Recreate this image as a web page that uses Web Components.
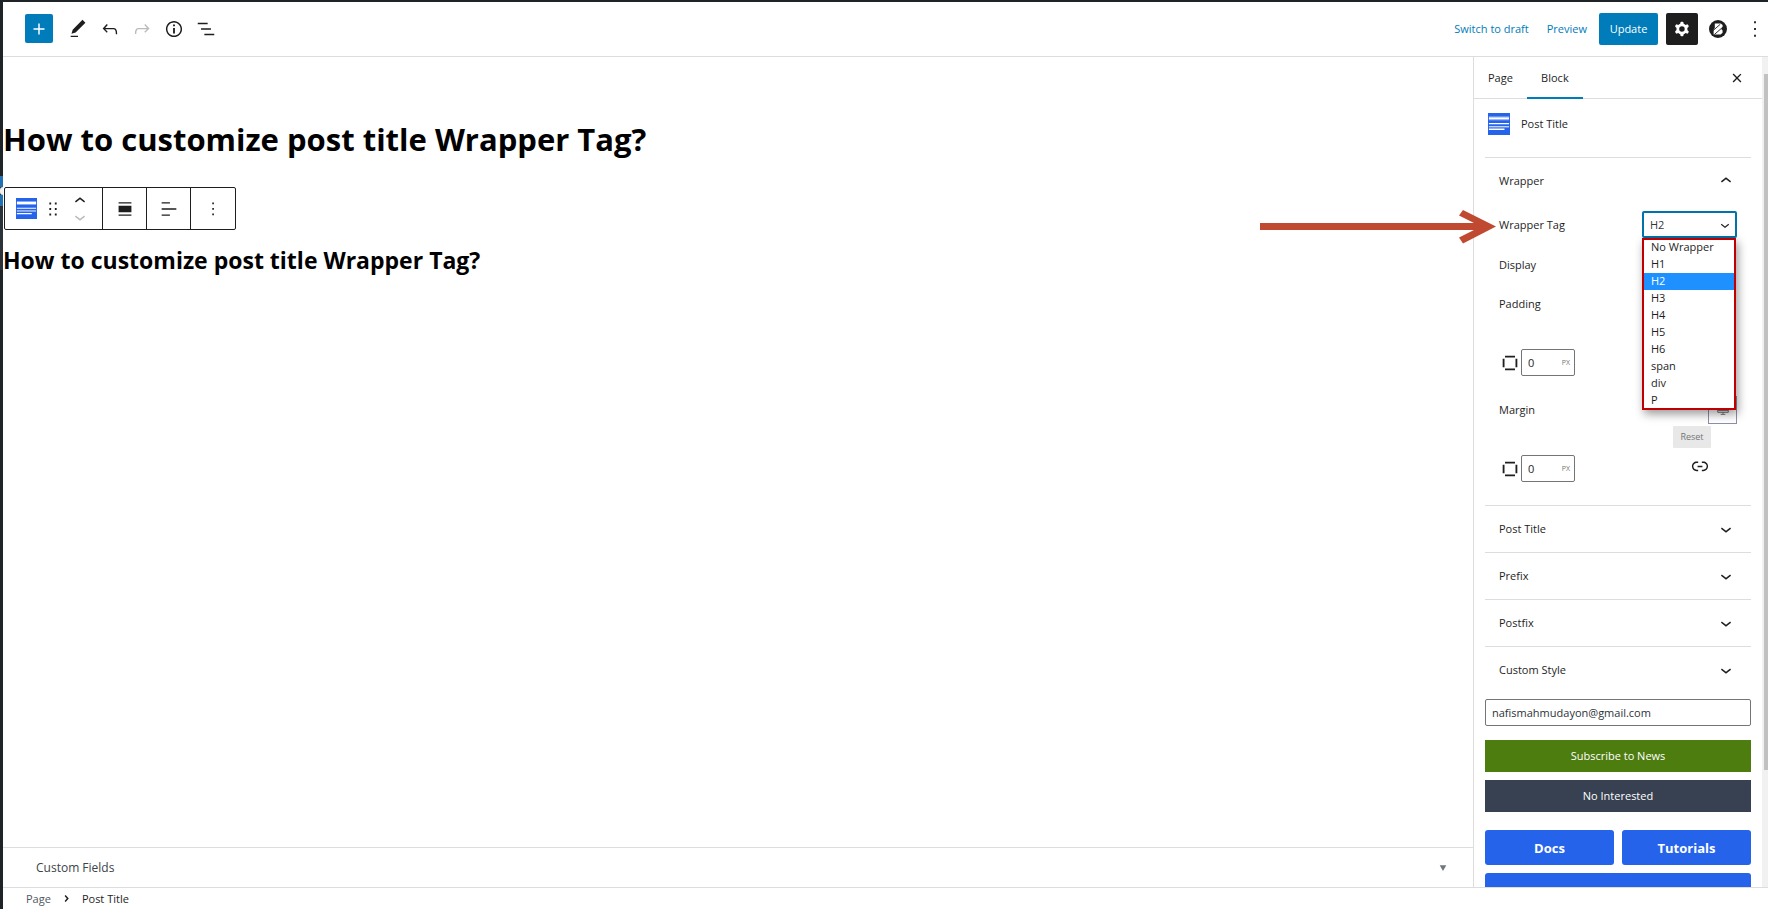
<!DOCTYPE html>
<html lang="en">
<head>
<meta charset="utf-8">
<title>Edit Page</title>
<style>
  html, body { margin: 0; height: 100%; }
  body {
    font: 11px/16px "Open Sans", "Noto Sans", sans-serif;
    color: #1e1e1e;
    background: #fff;
    overflow: hidden;
    --blue: #007cba;
    --ink: #1e1e1e;
    --line: #ddd;
    --royal: #2563eb;
  }
</style>
</head>
<body>
<editor-shell>
  <editor-header slot="header"></editor-header>
  <editor-canvas slot="canvas" heading="How to customize post title Wrapper Tag?"></editor-canvas>
  <block-sidebar slot="sidebar"></block-sidebar>
  <editor-breadcrumb slot="footer"></editor-breadcrumb>
</editor-shell>

<script>
const ICONS = {
  plus: '<path d="M18 11.2h-5.2V6h-1.6v5.2H6v1.6h5.2V18h1.6v-5.2H18z"/>',
  edit: '<path d="M20.1 5.1L16.9 2 6.2 12.7l-1.3 4.4 4.5-1.3L20.1 5.1zM4 20.8h8v-1.5H4v1.5z"/>',
  undo: '<path d="M18.3 11.7c-.6-.6-1.4-.9-2.3-.9H6.7l2.9-3.3-1.1-1-4.5 5L8.5 16l1-1-2.7-2.7H16c.5 0 .9.2 1.3.5 1 1 1 3.4 1 4.5v.3h1.5v-.2c0-1.5 0-4.3-1.5-5.7z"/>',
  redo: '<path d="M15.6 6.5l-1.1 1 2.9 3.3H8c-.9 0-1.7.3-2.3.9-1.4 1.5-1.4 4.2-1.4 5.6v.2h1.5v-.3c0-1.1 0-3.5 1-4.5.3-.3.7-.5 1.3-.5h9.2L14.5 15l1.1 1.1 4.6-4.6-4.6-5z"/>',
  info: '<path d="M12 3.2c-4.8 0-8.8 3.9-8.8 8.8 0 4.8 3.9 8.8 8.8 8.8 4.8 0 8.8-3.9 8.8-8.8 0-4.8-4-8.8-8.8-8.8zm0 16c-4 0-7.2-3.3-7.2-7.2C4.8 8 8 4.8 12 4.8s7.2 3.3 7.2 7.2c0 4-3.2 7.2-7.2 7.2zM11 17h2v-6h-2v6zm0-8h2V7h-2v2z"/>',
  list: '<path d="M13.8 5.2H3v1.5h10.8V5.2zm-3.6 12v1.5H21v-1.5H10.2zm7.2-6H6.6v1.5h10.8v-1.5z"/>',
  cog: '<path fill-rule="evenodd" d="M10.289 4.836A1 1 0 0111.275 4h1.306a1 1 0 01.987.836l.244 1.466c.787.26 1.503.679 2.108 1.218l1.393-.522a1 1 0 011.216.437l.653 1.13a1 1 0 01-.23 1.273l-1.148.944a6.025 6.025 0 010 2.435l1.149.946a1 1 0 01.23 1.272l-.653 1.13a1 1 0 01-1.216.437l-1.394-.522c-.605.54-1.32.958-2.108 1.218l-.244 1.466a1 1 0 01-.987.836h-1.306a1 1 0 01-.986-.836l-.244-1.466a5.995 5.995 0 01-2.108-1.218l-1.394.522a1 1 0 01-1.217-.436l-.653-1.131a1 1 0 01.23-1.272l1.149-.946a6.026 6.026 0 010-2.435l-1.148-.944a1 1 0 01-.23-1.272l.653-1.131a1 1 0 011.217-.437l1.393.522a5.994 5.994 0 012.108-1.218l.244-1.466zM14.929 12a3 3 0 11-6 0 3 3 0 016 0z"/>',
  brand: '<circle cx="12" cy="12" r="9.800"/><path fill="#fff" d="M8.500 6h6.500l2 1.500v2.700L15.500 12l1.500 1.600v2.600L14.800 18H7.200v-5.200L8.500 11z"/><path stroke="#1e1e1e" stroke-width="1" fill="none" d="M6.500 13.800L14.500 6.800M8 18L17.500 9.800"/>',
  more: '<path d="M11 3.500h2v2.200h-2zM11 10.900h2v2.200h-2zM11 18.300h2v2.200h-2z"/>',
  dots: '<path d="M11.200 5h1.800v1.800h-1.800zM11.200 11h1.800v1.800h-1.800zM11.200 17h1.800v1.800h-1.800z"/>',
  drag: '<path d="M8 5h2v2H8zM14 5h2v2h-2zM8 11h2v2H8zM14 11h2v2h-2zM8 17h2v2H8zM14 17h2v2h-2z"/>',
  up: '<path d="M6.500 12.400L12 8l5.500 4.400-.9 1.200L12 10l-4.500 3.600-1-1.200z"/>',
  down: '<path d="M17.500 11.600L12 16l-5.500-4.400.9-1.200L12 14l4.500-3.600 1 1.200z"/>',
  right: '<path d="M7 5.500l2.800-2.600L18 12l-8.200 9.100L7 18.500 12.800 12z"/>',
  close: '<path d="M12 13.060l3.712 3.713 1.061-1.060L13.061 12l3.712-3.712-1.060-1.060L12 10.938 8.288 7.227l-1.061 1.060L10.939 12l-3.712 3.712 1.060 1.061L12 13.061z"/>',
  link: '<path d="M15.600 7.200H14v1.500h1.600c2 0 3.700 1.700 3.700 3.700s-1.700 3.700-3.700 3.700H14v1.500h1.600c2.800 0 5.200-2.300 5.200-5.200 0-2.900-2.300-5.200-5.200-5.200zM4.700 12.400c0-2 1.700-3.700 3.700-3.700H10V7.200H8.400c-2.900 0-5.200 2.300-5.200 5.200 0 2.900 2.300 5.200 5.200 5.200H10v-1.500H8.400c-2 0-3.700-1.700-3.700-3.700zm4.600.9h5.300v-1.500H9.300v1.500z"/>',
  wide: '<path d="M5 4.600h14v1.500H5zM5 17.900h14v1.500H5zM5 8.500h14v7H5z"/>',
  text: '<path d="M4 4.600h9v1.500H4zM4 11.200h16v1.500H4zM4 17.900h9v1.500H4z"/>',
  sides: '<path d="M6 3.200h12v2.200H6zM6 18.600h12v2.200H6zM3.200 7h2.200v10H3.200zM18.600 7h2.200v10h-2.200z"/>',
  monitor: '<path fill="none" stroke="#666" stroke-width="1.500" d="M3 4h18v12H3zM3 13h18M8 19.500h8M12 16v3"/>',
  caret: '<path fill="#72777c" d="M2 4h20L12 21z"/>',
  block: '<path fill="#2563eb" d="M0 0h24v24H0z"/><path fill="#fff" d="M1 4.500h22V7H1zM1 11h22v1.300H1zM1 14.200h22V15H1zM1 17h17v1.600H1z"/><path fill="#a9c1f7" d="M1 3.700h22v.8H1zM1 7h22v.8H1zM1 15h22v.7H1z"/>'
};

const define = (name, markup, setup) => {
  const template = document.createElement('template');
  template.innerHTML = markup;
  customElements.define(name, class extends HTMLElement {
    connectedCallback() {
      if (this.shadowRoot) return;
      const root = this.attachShadow({ mode: 'open' });
      root.append(template.content.cloneNode(true));
      if (setup) setup(root, this);
    }
  });
};

define('ui-icon', `
  <style>
    :host { display: inline-flex; flex: none; width: 22px; height: 22px; }
    svg { width: 100%; height: 100%; fill: currentColor; }
  </style>
  <svg viewBox="0 0 24 24" aria-hidden="true"></svg>`,
  (root, el) => { root.querySelector('svg').innerHTML = ICONS[el.getAttribute('name')]; });

define('editor-shell', `
  <style>
    :host { display: flex; height: 100vh; box-sizing: border-box; border-top: 2px solid #1d2327; position: relative; }
    .menu { flex: none; width: 3px; display: flex; flex-direction: column; background: #1d2327; }
    .menu i:nth-child(1) { height: 174px; }
    .menu i:nth-child(2) { height: 11px; background: #2271b1; }
    .menu i:nth-child(3) { height: 8px; background: #f0f0f1; border-radius: 3px 0 0 3px; }
    .menu i:nth-child(4) { height: 11px; background: #2271b1; }
    .menu i:nth-child(5) { height: 64px; background: #2c3338; }
    .page { flex: 1; min-width: 0; display: flex; flex-direction: column; }
    main { flex: 1; min-height: 0; display: flex; position: relative; }
    .pointer { position: absolute; top: 150px; right: 272px; width: 236px; height: 38px; }
  </style>
  <div class="menu"><i></i><i></i><i></i><i></i><i></i></div>
  <div class="page">
    <slot name="header"></slot>
    <main>
      <slot name="canvas"></slot>
      <slot name="sidebar"></slot>
      <svg class="pointer" viewBox="0 0 236 38" aria-hidden="true">
        <path fill="#c04a31" d="M0 16H214L199 8.500 203 3 236 19.500 203 36.500 199 30.500 214 23H0z"/>
      </svg>
    </main>
    <slot name="footer"></slot>
  </div>`);

define('editor-header', `
  <style>
    :host { display: flex; justify-content: space-between; align-items: center; height: 55px; padding: 0 2px 1px 22px; box-sizing: border-box; border-bottom: 1px solid var(--line); }
    div { display: flex; align-items: center; }
    button { font: inherit; color: inherit; border: 0; background: none; padding: 0; display: flex; align-items: center; justify-content: center; }
    .tools button { width: 32px; height: 32px; }
    .tools .add { width: 28px; height: 29px; margin-right: 9px; background: var(--blue); color: #fff; border-radius: 2px; }
    .tools button:disabled { color: #bbb; }
    .actions { gap: 8px; }
    a { color: var(--blue); text-decoration: none; margin-right: 10px; }
    .update { width: 59px; height: 32px; margin-left: -6px; color: #fff; background: var(--blue); border-radius: 2px; }
    .cog { width: 32px; height: 32px; color: #fff; background: var(--ink); border-radius: 2px; }
    .brand { width: 24px; }
    .more { width: 22px; margin-left: 6px; }
  </style>
  <div class="tools">
    <button class="add" aria-label="Add block"><ui-icon name="plus"></ui-icon></button>
    <button aria-label="Tools"><ui-icon name="edit"></ui-icon></button>
    <button aria-label="Undo"><ui-icon name="undo"></ui-icon></button>
    <button aria-label="Redo" disabled><ui-icon name="redo"></ui-icon></button>
    <button aria-label="Details"><ui-icon name="info"></ui-icon></button>
    <button aria-label="List view"><ui-icon name="list"></ui-icon></button>
  </div>
  <div class="actions">
    <a href="#draft">Switch to draft</a>
    <a href="#preview">Preview</a>
    <button class="update">Update</button>
    <button class="cog" aria-label="Settings"><ui-icon name="cog"></ui-icon></button>
    <button class="brand" aria-label="Post blocks"><ui-icon name="brand"></ui-icon></button>
    <button class="more" aria-label="Options"><ui-icon name="more"></ui-icon></button>
  </div>`);

define('block-toolbar', `
  <style>
    :host { display: inline-flex; align-self: flex-start; height: 41px; border: 1px solid var(--ink); border-radius: 2px; background: #fff; }
    .group { display: flex; align-items: center; justify-content: center; width: 43px; border-right: 1px solid var(--ink); }
    .group:last-child { border-right: 0; width: 44px; }
    .main { width: 97px; }
    button { border: 0; background: none; padding: 0; display: flex; color: inherit; }
    .main ui-icon[name="block"] { width: 21px; height: 21px; }
    .grip { margin: 0 5px; }
    .move button { height: 16px; align-items: center; }
    .off { color: #bbb; }
  </style>
  <div class="group main">
    <button aria-label="Post Title block"><ui-icon name="block"></ui-icon></button>
    <button class="grip" aria-label="Drag"><ui-icon name="drag"></ui-icon></button>
    <div class="move">
      <button aria-label="Move up"><ui-icon name="up"></ui-icon></button>
      <button class="off" aria-label="Move down"><ui-icon name="down"></ui-icon></button>
    </div>
  </div>
  <div class="group"><button aria-label="Width"><ui-icon name="wide"></ui-icon></button></div>
  <div class="group"><button aria-label="Align text"><ui-icon name="text"></ui-icon></button></div>
  <div class="group"><button aria-label="Options"><ui-icon name="dots"></ui-icon></button></div>`);

define('editor-canvas', `
  <style>
    :host { flex: 1; min-width: 0; display: flex; flex-direction: column; }
    .content { flex: 1; display: flex; flex-direction: column; padding-top: 61px; }
    h1, h2 { margin: 0; color: #000; font-weight: 700; }
    h1 { font-size: 31px; line-height: 42px; margin-bottom: 27px; }
    h2 { font-size: 23px; line-height: 30px; margin-top: 15px; }
    block-toolbar { margin-left: 1px; }
    button { font: inherit; font-size: 12px; color: #3c434a; background: none; border: 0; border-top: 1px solid var(--line); height: 40px; padding: 0 26px 0 33px; display: flex; align-items: center; justify-content: space-between; }
    ui-icon { width: 8px; height: 8px; }
  </style>
  <div class="content">
    <h1></h1>
    <block-toolbar></block-toolbar>
    <h2></h2>
  </div>
  <button>Custom Fields <ui-icon name="caret"></ui-icon></button>`,
  (root, el) => root.querySelectorAll('h1, h2').forEach(h => { h.textContent = el.getAttribute('heading'); }));

define('settings-panel', `
  <style>
    :host { display: block; border-top: 1px solid var(--line); }
    button { width: 100%; height: 46px; padding: 0 14px; font: inherit; font-weight: 500; color: inherit; border: 0; background: none; display: flex; align-items: center; justify-content: space-between; }
    .body { padding: 0 14px; }
    :host([open]) .body { padding-bottom: 9px; }
  </style>
  <button></button>
  <div class="body"><slot></slot></div>`,
  (root, el) => {
    const open = el.hasAttribute('open');
    const button = root.querySelector('button');
    button.setAttribute('aria-expanded', open);
    button.innerHTML = `<span>${el.getAttribute('label')}</span><ui-icon name="${open ? 'up' : 'down'}"></ui-icon>`;
  });

define('tag-select', `
  <style>
    :host { display: flex; align-items: center; justify-content: space-between; height: 41px; }
    .field { position: relative; display: flex; width: 95px; }
    select { appearance: none; width: 100%; height: 27px; font: inherit; color: #32373c; padding: 0 6px; border: 2px solid #0073aa; border-radius: 2px; background: #fff; }
    .field > ui-icon { position: absolute; right: 3px; top: 5px; width: 18px; height: 18px; pointer-events: none; }
    ul { position: absolute; z-index: 1; top: 27px; left: 0; right: 1px; height: 172px; box-sizing: border-box; margin: 0; padding: 0; list-style: none; overflow: hidden; background: #fff; border: 2px solid #c00000; box-shadow: 2px 4px 9px rgba(0, 0, 0, .4); }
    li { height: 17px; line-height: 16px; padding: 0 7px; }
    li:first-child { height: 16px; line-height: 14px; }
    li[aria-selected="true"] { background: #1e90ff; color: #fff; }
  </style>
  <label for="tag">Wrapper Tag</label>
  <div class="field">
    <select id="tag"></select>
    <ui-icon name="down"></ui-icon>
    <ul role="listbox" aria-label="Wrapper Tag"></ul>
  </div>`,
  root => {
    const value = 'H2';
    for (const name of ['No Wrapper', 'H1', 'H2', 'H3', 'H4', 'H5', 'H6', 'span', 'div', 'P']) {
      root.querySelector('select').add(new Option(name, name, false, name === value));
      const item = document.createElement('li');
      item.textContent = name;
      item.setAttribute('role', 'option');
      item.setAttribute('aria-selected', name === value);
      root.querySelector('ul').append(item);
    }
  });

define('box-control', `
  <style>
    :host { display: block; margin-top: 6px; padding-bottom: 14px; }
    .head, .unit, .values { display: flex; align-items: center; }
    .head { height: 28px; justify-content: space-between; }
    button { font: inherit; color: inherit; padding: 0; border: 0; background: none; display: flex; align-items: center; justify-content: center; }
    .device { width: 29px; height: 28px; box-sizing: border-box; border: 1px solid #8c8fa6; }
    .device ui-icon { width: 14px; height: 14px; }
    .reset { margin: 2px 26px 0 auto; width: 38px; height: 22px; font-size: 9px; color: #757575; background: #e8e8e8; border-radius: 1px; }
    .values { margin-top: 7px; justify-content: space-between; }
    .unit ui-icon { width: 20px; height: 20px; margin: 0 1px; }
    .box { display: flex; align-items: center; width: 54px; height: 27px; box-sizing: border-box; border: 1px solid #757575; border-radius: 2px; padding: 0 4px 0 6px; }
    input { flex: 1; min-width: 0; font: inherit; color: inherit; border: 0; padding: 0; background: none; }
    .box span { font-size: 7px; color: #757575; }
    .link { margin: 0 26px 5px 0; }
    :host([collapsed]) .device, :host([collapsed]) .reset, :host([collapsed]) .link { visibility: hidden; }
  </style>
  <div class="head"><label for="value"></label><button class="device" aria-label="Desktop"><ui-icon name="monitor"></ui-icon></button></div>
  <button class="reset">Reset</button>
  <div class="values">
    <div class="unit"><ui-icon name="sides"></ui-icon><div class="box"><input id="value" value="0"><span>PX</span></div></div>
    <button class="link" aria-label="Link sides"><ui-icon name="link"></ui-icon></button>
  </div>`,
  (root, el) => { root.querySelector('label').textContent = el.getAttribute('label'); });

define('block-sidebar', `
  <style>
    :host { flex: none; width: 294px; display: flex; border-left: 1px solid var(--line); overflow: hidden; background: #fff; }
    .column { flex: 1; min-width: 0; }
    nav { display: flex; height: 41px; border-bottom: 1px solid var(--line); padding-right: 14px; }
    button { font: inherit; color: inherit; padding: 0; border: 0; background: none; }
    nav button { height: 42px; padding: 2px 14px 0; border-bottom: 2px solid transparent; box-sizing: border-box; }
    nav button[aria-selected="true"] { width: 56px; border-color: var(--blue); }
    nav .close { margin-left: auto; padding: 2px 0 0; display: flex; align-items: center; }
    .content { padding: 0 11px; }
    .card { display: flex; align-items: center; gap: 11px; height: 58px; box-sizing: border-box; padding: 0 3px 8px; }
    .row { height: 39px; display: flex; align-items: center; }
    form { display: flex; flex-direction: column; margin: 6px 0 0; }
    input { font: inherit; color: #2c3338; height: 27px; box-sizing: border-box; border: 1px solid #757575; border-radius: 2px; padding: 0 6px; margin: 0 0 14px; }
    form button { height: 32px; color: #fff; background: #4d7c0f; margin-bottom: 8px; }
    form .no { background: #374151; margin-bottom: 18px; }
    .links { display: grid; grid-template-columns: 1fr 1fr; gap: 8px; }
    .links a { height: 35px; display: flex; align-items: center; justify-content: center; border-radius: 3px; background: var(--royal); color: #fff; font-size: 13px; font-weight: 700; text-decoration: none; }
    .links a:last-child { grid-column: span 2; }
    .scroll { flex: none; width: 4px; padding: 17px 0 0 2px; background: #f1f1f1; }
    .thumb { height: 696px; max-height: 86%; background: #c1c1c1; }
  </style>
  <div class="column">
    <nav>
      <button role="tab">Page</button>
      <button role="tab" aria-selected="true">Block</button>
      <button class="close" aria-label="Close settings"><ui-icon name="close"></ui-icon></button>
    </nav>
    <div class="content">
      <div class="card"><ui-icon name="block"></ui-icon><span>Post Title</span></div>
      <settings-panel label="Wrapper" open>
        <tag-select></tag-select>
        <div class="row">Display</div>
        <box-control label="Padding" collapsed></box-control>
        <box-control label="Margin"></box-control>
      </settings-panel>
      <settings-panel label="Post Title"></settings-panel>
      <settings-panel label="Prefix"></settings-panel>
      <settings-panel label="Postfix"></settings-panel>
      <settings-panel label="Custom Style"></settings-panel>
      <form>
        <input type="email" aria-label="Email" value="nafismahmudayon@gmail.com">
        <button type="button">Subscribe to News</button>
        <button type="button" class="no">No Interested</button>
      </form>
      <div class="links"><a href="#docs">Docs</a><a href="#tutorials">Tutorials</a><a href="#more" aria-label="More"></a></div>
    </div>
  </div>
  <div class="scroll"><div class="thumb"></div></div>`);

define('editor-breadcrumb', `
  <style>
    :host { flex: none; display: flex; align-items: center; height: 21px; padding: 0 23px; border-top: 1px solid var(--line); gap: 11px; }
    a { color: #50575e; text-decoration: none; }
    ui-icon { width: 9px; height: 9px; }
  </style>
  <a href="#page">Page</a><ui-icon name="right"></ui-icon><span>Post Title</span>`);
</script>
</body>
</html>
